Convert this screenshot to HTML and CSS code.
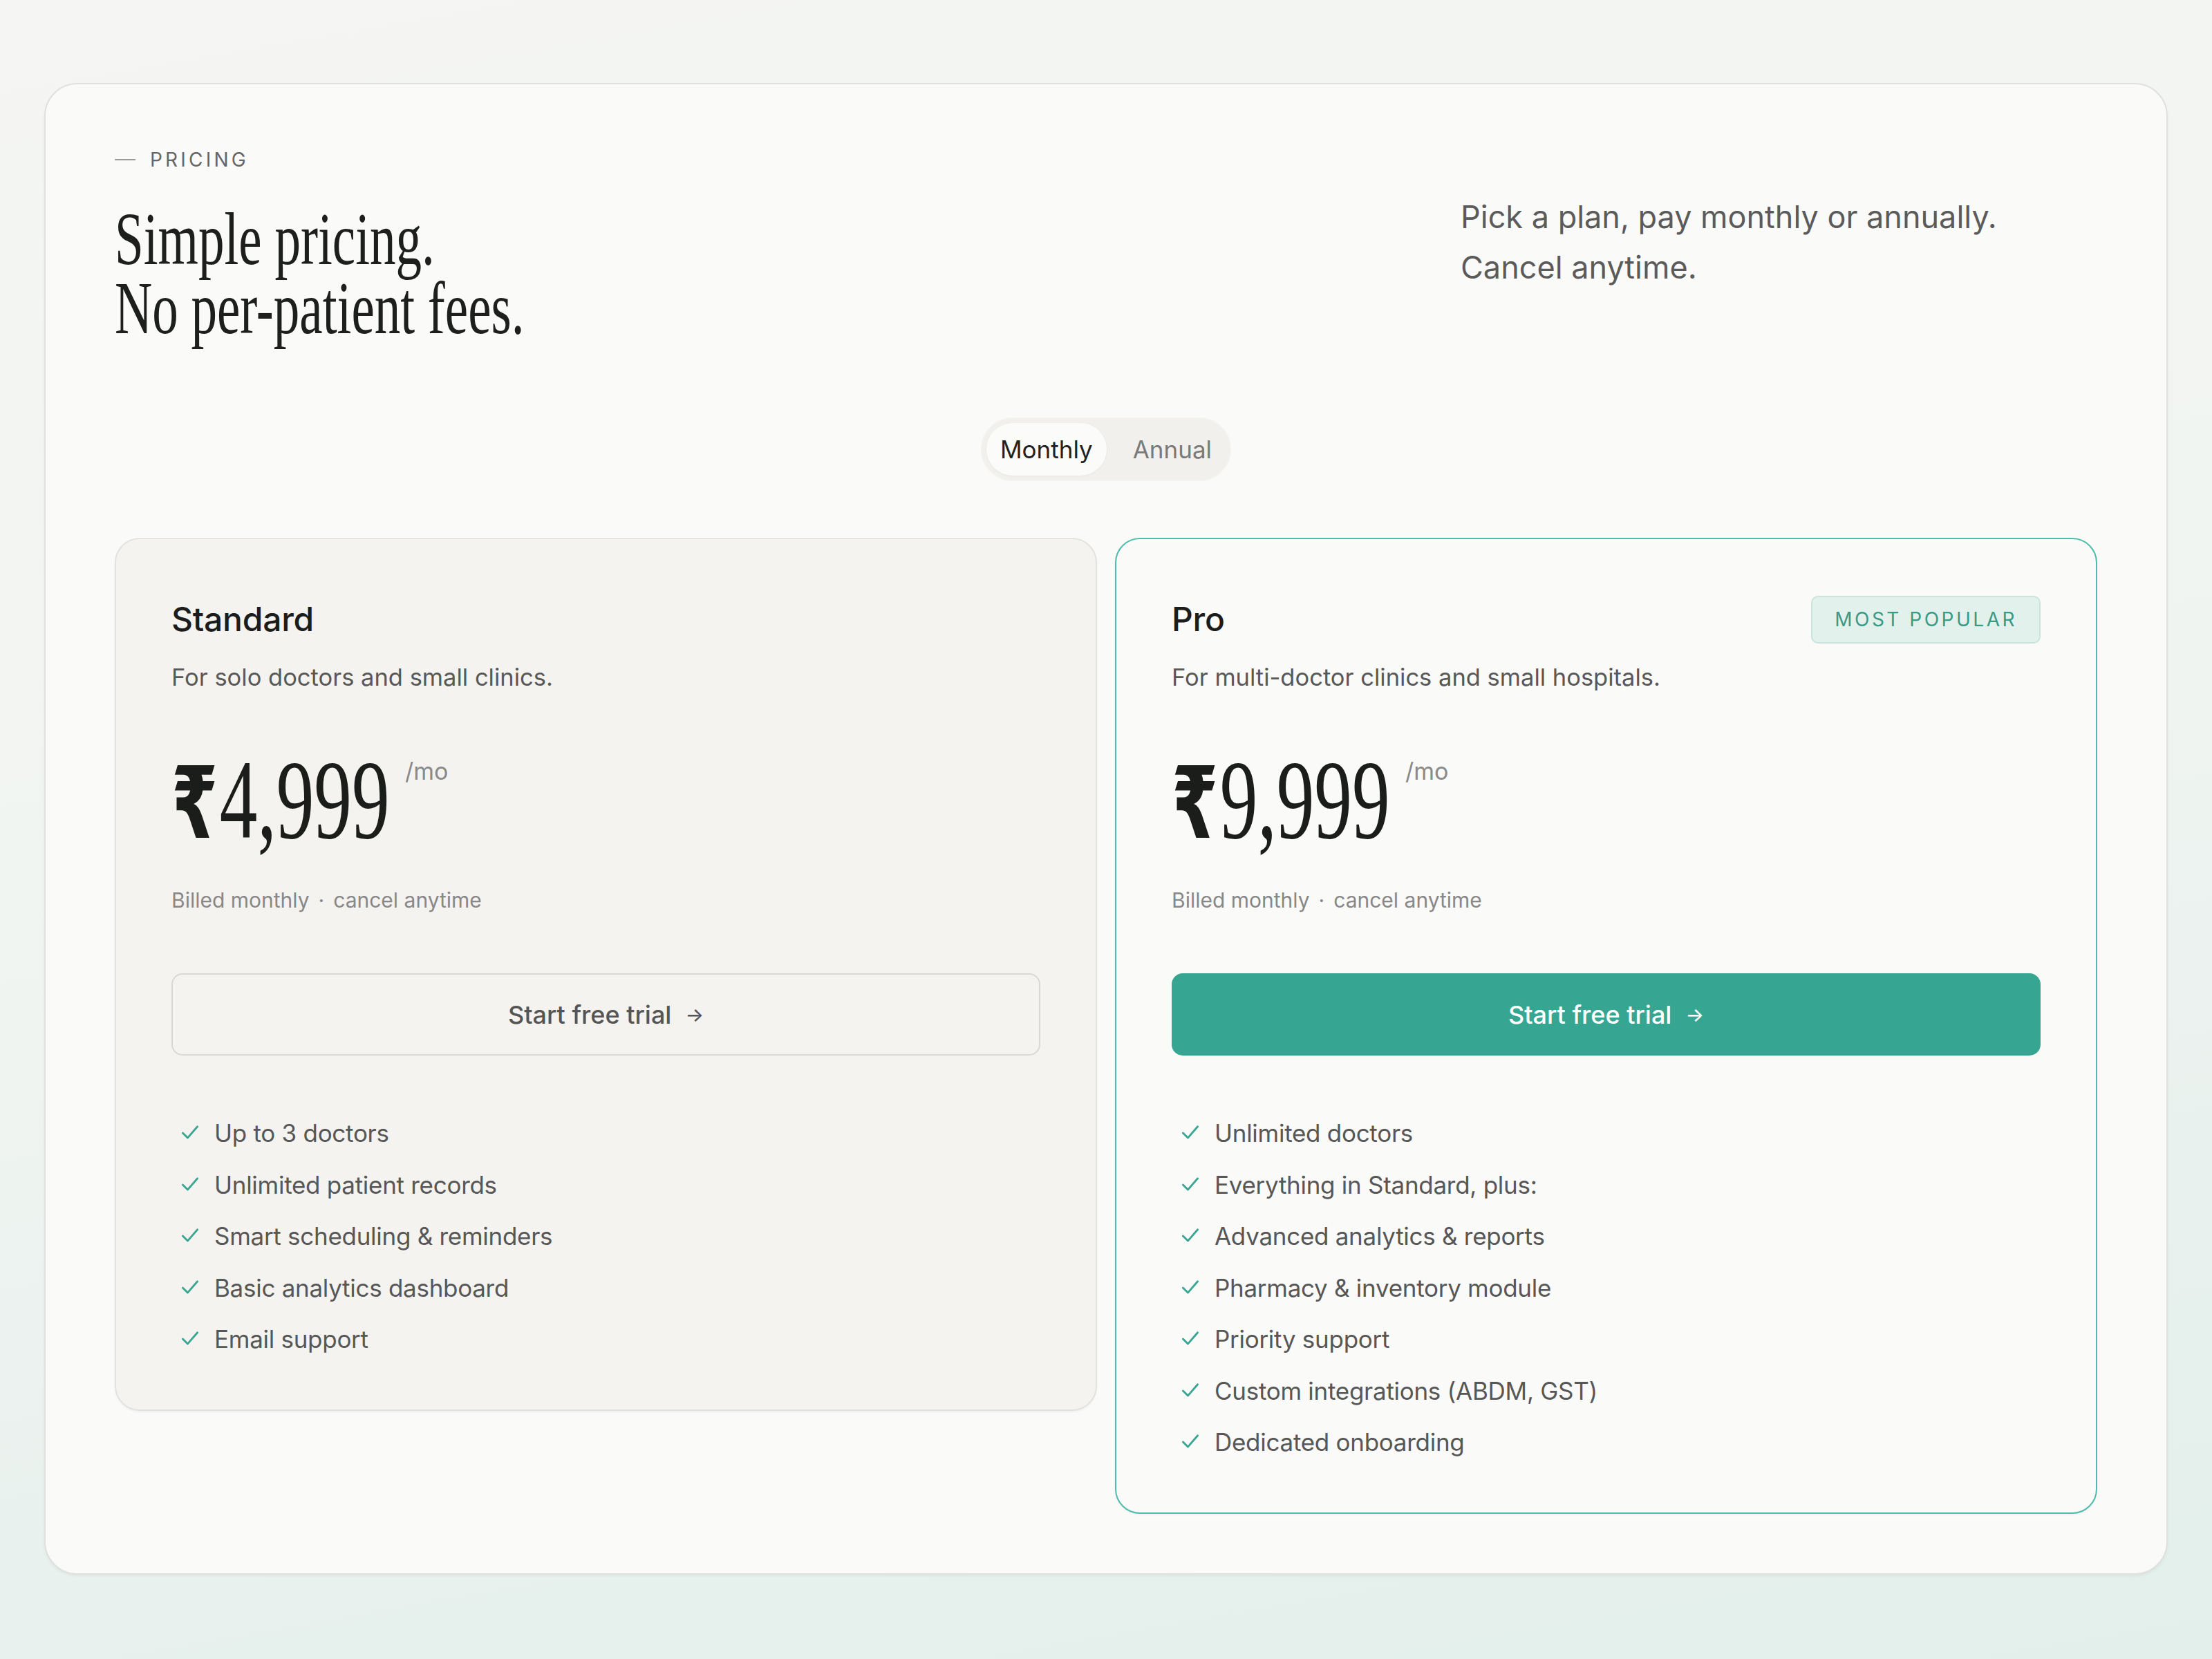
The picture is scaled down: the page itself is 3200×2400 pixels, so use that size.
FILE: index.html
```html
<!DOCTYPE html>
<html>
	<head>
		<meta charset="utf-8">
		<title>Pricing</title>
		<link rel="stylesheet" href="styles.css">
	</head>
	<body>
		<section class="pricing">
			<div class="head">
				<div class="head-left">
					<p class="eyebrow"><span class="dash"></span>PRICING</p>
					<h1 class="title"><span>Simple pricing.</span><span>No per-patient fees.</span></h1>
				</div>
				<p class="lead">Pick a plan, pay monthly or annually.<br>Cancel anytime.</p>
			</div>

			<div class="toggle">
				<span class="opt active">Monthly</span>
				<span class="opt">Annual</span>
			</div>

			<div class="plans">
				<div class="plan">
					<div class="plan-top">
						<h2 class="plan-name">Standard</h2>
					</div>
					<p class="plan-desc">For solo doctors and small clinics.</p>
					<div class="price">
						<div class="amount-box"><span class="amount"><span class="rs">₹</span>4,999</span></div>
						<span class="per">/mo</span>
					</div>
					<p class="billed">Billed monthly<span class="dot">·</span>cancel anytime</p>
					<a class="btn">Start free trial<span class="arrow">→</span></a>
					<ul class="features">
						<li><svg viewBox="0 0 24 24"><polyline points="4.5 12 9.5 17 19.5 5.5"/></svg>Up to 3 doctors</li>
						<li><svg viewBox="0 0 24 24"><polyline points="4.5 12 9.5 17 19.5 5.5"/></svg>Unlimited patient records</li>
						<li><svg viewBox="0 0 24 24"><polyline points="4.5 12 9.5 17 19.5 5.5"/></svg>Smart scheduling &amp; reminders</li>
						<li><svg viewBox="0 0 24 24"><polyline points="4.5 12 9.5 17 19.5 5.5"/></svg>Basic analytics dashboard</li>
						<li><svg viewBox="0 0 24 24"><polyline points="4.5 12 9.5 17 19.5 5.5"/></svg>Email support</li>
					</ul>
				</div>

				<div class="plan pro">
					<div class="plan-top">
						<h2 class="plan-name">Pro</h2>
						<span class="badge">MOST POPULAR</span>
					</div>
					<p class="plan-desc">For multi-doctor clinics and small hospitals.</p>
					<div class="price">
						<div class="amount-box"><span class="amount"><span class="rs">₹</span>9,999</span></div>
						<span class="per">/mo</span>
					</div>
					<p class="billed">Billed monthly<span class="dot">·</span>cancel anytime</p>
					<a class="btn primary">Start free trial<span class="arrow">→</span></a>
					<ul class="features">
						<li><svg viewBox="0 0 24 24"><polyline points="4.5 12 9.5 17 19.5 5.5"/></svg>Unlimited doctors</li>
						<li><svg viewBox="0 0 24 24"><polyline points="4.5 12 9.5 17 19.5 5.5"/></svg>Everything in Standard, plus:</li>
						<li><svg viewBox="0 0 24 24"><polyline points="4.5 12 9.5 17 19.5 5.5"/></svg>Advanced analytics &amp; reports</li>
						<li><svg viewBox="0 0 24 24"><polyline points="4.5 12 9.5 17 19.5 5.5"/></svg>Pharmacy &amp; inventory module</li>
						<li><svg viewBox="0 0 24 24"><polyline points="4.5 12 9.5 17 19.5 5.5"/></svg>Priority support</li>
						<li><svg viewBox="0 0 24 24"><polyline points="4.5 12 9.5 17 19.5 5.5"/></svg>Custom integrations (ABDM, GST)</li>
						<li><svg viewBox="0 0 24 24"><polyline points="4.5 12 9.5 17 19.5 5.5"/></svg>Dedicated onboarding</li>
					</ul>
				</div>
			</div>
		</section>
	</body>
</html>
```

FILE: styles.css
```css
*{margin:0;padding:0;box-sizing:border-box;}
html,body{height:100%;}
body{background:linear-gradient(170deg,#f5f6f4 0%,#f0f4f1 50%,#e2efeb 100%);font-family:Inter,"Liberation Sans",sans-serif;color:#555;padding:120px 64px;}
ul li{list-style:none;}

.pricing{background:#fafaf8;border:2px solid #e0e1dd;border-radius:48px;padding:91px 100px 86px;box-shadow:0 2px 4px rgba(0,0,0,.05);}

/* header */
.head{display:flex;justify-content:space-between;align-items:flex-start;}
.eyebrow{display:flex;align-items:center;font-size:28px;line-height:36px;letter-spacing:.15em;color:#666;}
.eyebrow .dash{width:30px;height:2px;background:#9a9a98;margin-right:21px;}
.title{margin-top:47px;font-family:"Liberation Serif","Times New Roman",serif;font-weight:400;font-size:108px;line-height:100px;color:#1d1f1c;transform:scaleX(.695);transform-origin:left top;white-space:nowrap;}
.title span{display:block;height:100px;}
.lead{width:921px;margin-top:64px;font-size:45px;line-height:73px;color:#5b5b5b;}

/* toggle */
.toggle{display:flex;gap:18px;width:max-content;margin:108px auto 0;padding:6px;background:#f1f0ed;border:2px solid #f3f2ef;border-radius:50px;}
.toggle .opt{height:76px;padding:0 20px;border-radius:40px;font-size:35px;line-height:76px;color:#7a7a7a;}
.toggle .opt.active{background:#fbfbf9;color:#222;box-shadow:0 1px 3px rgba(0,0,0,.04);}

/* cards */
.plans{display:grid;grid-template-columns:1fr 1fr;gap:26px;align-items:start;margin-top:82px;}
.plan{background:#f4f3f0;border:2px solid #e3e2de;border-radius:36px;padding:87px 80px 78px;box-shadow:0 2px 3px rgba(0,0,0,.04);}
.plan.pro{background:#fafaf8;border-color:#4dbcad;}
.plan-top{display:flex;justify-content:space-between;align-items:center;height:58px;}
.plan-name{font-size:48px;font-weight:500;line-height:58px;color:#1c1c1c;letter-spacing:-.005em;}
.badge{height:69px;padding:0 32px;border:2px solid #c9e4dc;border-radius:10px;background:#e2f1ec;color:#3a9a86;font-size:28px;line-height:65px;letter-spacing:.125em;}
.plan-desc{margin-top:31px;font-size:34.5px;line-height:48px;color:#585858;}

.price{display:flex;align-items:flex-start;gap:14px;margin-top:72px;height:163px;}
.amount-box{width:324px;}
.amount{display:inline-block;font-family:"Liberation Serif","Times New Roman",serif;font-size:163px;line-height:163px;color:#1b1d1a;white-space:nowrap;transform:scaleX(.67);transform-origin:left top;}
.amount .rs{font-family:"DejaVu Sans",sans-serif;font-weight:700;font-size:144px;margin-right:4px;}
.per{margin-top:20px;font-size:34px;line-height:40px;color:#8a8a8a;}

.billed{margin-top:43px;font-size:30px;line-height:40px;color:#888;}
.billed .dot{margin:0 13px;}

.btn{display:flex;justify-content:center;align-items:center;height:119px;margin-top:86px;border:2px solid #d9d8d4;border-radius:16px;font-size:36px;font-weight:500;color:#555;cursor:pointer;}
.btn .arrow{margin-left:20px;font-size:28px;}
.btn.primary{background:#36a692;border-color:#36a692;color:#fff;}

.features{display:flex;flex-direction:column;gap:26.5px;margin-top:88px;}
.features li{display:flex;align-items:center;gap:18px;padding-left:10px;font-size:35px;line-height:48px;letter-spacing:-.008em;color:#575757;}
.features svg{width:34px;height:34px;fill:none;stroke:#3aa592;stroke-width:2;stroke-linecap:round;stroke-linejoin:round;flex:none;}
```
